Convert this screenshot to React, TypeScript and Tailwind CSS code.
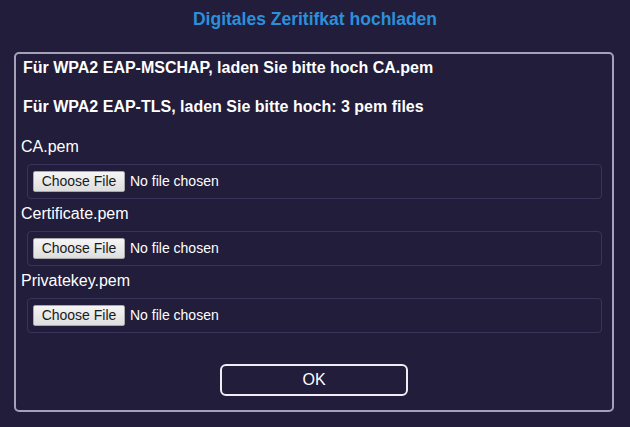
const files = ['CA.pem', 'Certificate.pem', 'Privatekey.pem'];

function FilePicker() {
  return (
    <div className="ml-[11px] mr-[10px] h-[35px] flex items-center pl-[5px] border border-[#39355a] rounded-[4px]">
      <span className="w-[92px] h-[21px] flex items-center justify-center text-[14px] text-[#1a1a1a] bg-gradient-to-b from-[#f5f5f5] to-[#dedede] border border-[#a9a9a9] rounded-[2px]">
        Choose File
      </span>
      <span className="ml-[5px] text-[14px] text-white">No file chosen</span>
    </div>
  );
}

export default function App() {
  return (
    <div className="w-[630px] h-[427px] bg-[#211d3a] font-['Liberation_Sans',Arial,sans-serif] overflow-hidden">
      <div className="h-[38px] flex items-center justify-center text-[17.5px] font-bold text-[#2b90dc]">
        Digitales Zeritifkat hochladen
      </div>

      <div className="mt-[14px] ml-[14px] w-[600px] border-2 border-[#a4a2b8] rounded-[5px] flex flex-col">
        <div className="h-[28px] flex items-center pl-[7px] text-[16px] font-bold text-white">
          Für WPA2 EAP-MSCHAP, laden Sie bitte hoch CA.pem
        </div>
        <div className="mt-[11px] h-[28px] flex items-center pl-[7px] text-[16px] font-bold text-white">
          Für WPA2 EAP-TLS, laden Sie bitte hoch: 3 pem files
        </div>

        <div className="mt-[14px] flex flex-col">
          {files.map((name) => (
            <div key={name} className="flex flex-col">
              <div className="h-[24px] flex items-center pl-[5px] text-[16px] text-white">
                {name}
              </div>
              <div className="mt-[5px] mb-[3px]">
                <FilePicker />
              </div>
            </div>
          ))}
        </div>

        <div className="mt-[28px] mb-[14px] flex justify-center">
          <button className="w-[188px] h-[32px] border-2 border-[#eeeef4] rounded-[6px] text-[16px] text-white bg-transparent">
            OK
          </button>
        </div>
      </div>
    </div>
  );
}
